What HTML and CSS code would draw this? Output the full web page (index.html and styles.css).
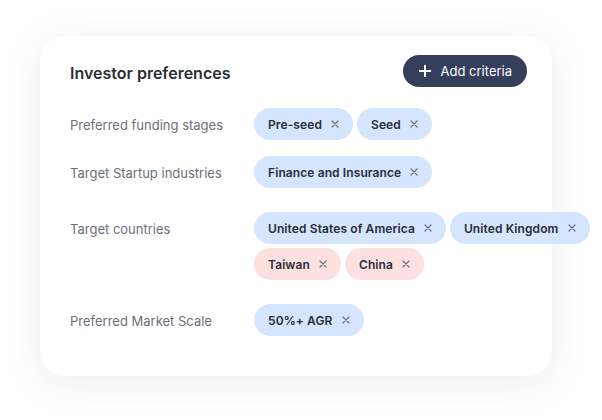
FILE: index.html
```html
<!DOCTYPE html>
<html lang="en">
<head>
<meta charset="utf-8">
<title>Investor preferences</title>
<link rel="stylesheet" href="styles.css">
</head>
<body>
<div class="card">
  <div class="header">
    <h2 class="title">Investor preferences</h2>
    <button class="add-btn" type="button">
      <svg class="plus" width="12" height="12" viewBox="0 0 12 12" aria-hidden="true"><path d="M6 0.5v11M0.5 6h11" stroke="#fff" stroke-width="2" stroke-linecap="round"/></svg>
      <span>Add criteria</span>
    </button>
  </div>
  <div class="rows">
    <div class="row">
      <div class="label">Preferred funding stages</div>
      <div class="chips">
        <span class="chip">Pre-seed<svg class="x" viewBox="0 0 8 8"><path d="M1 1l6 6M7 1l-6 6"/></svg></span>
        <span class="chip">Seed<svg class="x" viewBox="0 0 8 8"><path d="M1 1l6 6M7 1l-6 6"/></svg></span>
      </div>
    </div>
    <div class="row">
      <div class="label">Target Startup industries</div>
      <div class="chips">
        <span class="chip">Finance and Insurance<svg class="x" viewBox="0 0 8 8"><path d="M1 1l6 6M7 1l-6 6"/></svg></span>
      </div>
    </div>
    <div class="row row-wrap">
      <div class="label">Target countries</div>
      <div class="chips">
        <span class="chip">United States of America<svg class="x" viewBox="0 0 8 8"><path d="M1 1l6 6M7 1l-6 6"/></svg></span>
        <span class="chip">United Kingdom<svg class="x" viewBox="0 0 8 8"><path d="M1 1l6 6M7 1l-6 6"/></svg></span>
        <span class="chip chip-red">Taiwan<svg class="x" viewBox="0 0 8 8"><path d="M1 1l6 6M7 1l-6 6"/></svg></span>
        <span class="chip chip-red">China<svg class="x" viewBox="0 0 8 8"><path d="M1 1l6 6M7 1l-6 6"/></svg></span>
      </div>
    </div>
    <div class="row">
      <div class="label">Preferred Market Scale</div>
      <div class="chips">
        <span class="chip">50%+ AGR<svg class="x" viewBox="0 0 8 8"><path d="M1 1l6 6M7 1l-6 6"/></svg></span>
      </div>
    </div>
  </div>
</div>
</body>
</html>
```
FILE: styles.css
```css
* { box-sizing: border-box; }
html, body { margin: 0; padding: 0; }
body {
  width: 602px;
  height: 420px;
  background: #ffffff;
  font-family: Inter, "Noto Sans", sans-serif;
  padding: 36px 0 0 40px;
  overflow: hidden;
}
.card {
  width: 512px;
  height: 340px;
  background: #fff;
  border-radius: 24px;
  box-shadow: 0 6px 40px rgba(40, 50, 100, 0.09);
  padding: 19px 25px 0 30px;
}
.header {
  display: flex;
  align-items: center;
  justify-content: space-between;
  height: 32px;
}
.title {
  margin: 0;
  padding-top: 4px;
  font-size: 16px;
  font-weight: 600;
  color: #2b2d38;
}
.add-btn {
  display: flex;
  align-items: center;
  gap: 10px;
  height: 32px;
  padding: 0 15px 0 16px;
  border: none;
  border-radius: 16px;
  background: #353e5b;
  color: #fff;
  font-family: inherit;
  font-size: 13px;
  font-weight: 400;
}
.plus { display: block; }
.rows {
  margin-top: 21px;
  display: flex;
  flex-direction: column;
  gap: 16px;
}
.row {
  display: flex;
  align-items: flex-start;
}
.row-wrap { padding: 8px 0; }
.label {
  width: 184px;
  flex-shrink: 0;
  height: 32px;
  line-height: 32px;
  font-size: 13px;
  color: #6c6f7b;
  padding-top: 1px;
}
.chips {
  display: flex;
  flex-wrap: wrap;
  gap: 4px;
  width: 346px;
  margin-right: -66px;
}
.chip {
  display: inline-flex;
  align-items: center;
  gap: 9px;
  height: 32px;
  padding: 0 14px;
  border-radius: 16px;
  background: #d4e5fd;
  color: #2a2c38;
  font-size: 12px;
  font-weight: 600;
  letter-spacing: 0.1px;
  white-space: nowrap;
}
.chip-red { background: #fde0e0; }
.x {
  width: 8px;
  height: 8px;
  fill: none;
  stroke: #6f7380;
  stroke-width: 1.3;
  stroke-linecap: round;
}
```
